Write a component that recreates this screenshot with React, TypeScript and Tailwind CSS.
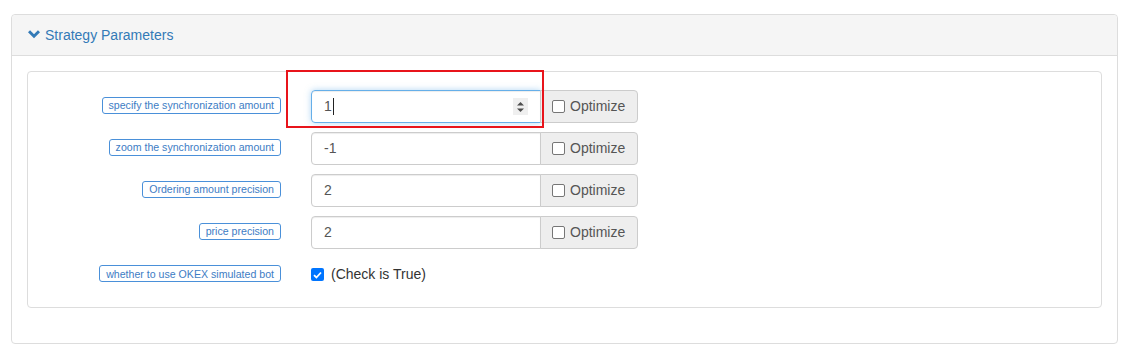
import React from "react";

type Param = {
  label: string;
  value: string;
  focused?: boolean;
};

const params: Param[] = [
  { label: "specify the synchronization amount", value: "1", focused: true },
  { label: "zoom the synchronization amount", value: "-1" },
  { label: "Ordering amount precision", value: "2" },
  { label: "price precision", value: "2" },
];

export default function App() {
  return (
    <div className="w-[1133px] h-[356px] bg-white pt-[14px] pl-[11px] font-['Liberation_Sans',Arial,sans-serif] text-[14px] text-[#333]">
      <div className="w-[1107px] h-[330px] border border-[#ddd] rounded-[4px] flex flex-col">
        <header className="h-[41px] bg-[#f5f5f5] border-b border-[#ddd] rounded-t-[4px] flex items-center pl-[16px] gap-[5px] text-[#337ab7]">
          <svg width="12" height="10" viewBox="0 0 12 10" className="mt-[-2px]">
            <path d="M1 2.2 L6 7.2 L11 2.2" fill="none" stroke="#337ab7" strokeWidth="3" />
          </svg>
          <span>Strategy Parameters</span>
        </header>

        <div className="px-[15px] pt-[15px]">
          <div className="h-[237px] border border-[#ddd] rounded-[4px] pt-[18px] flex flex-col gap-[9px]">
            {params.map((p) => (
              <ParamRow key={p.label} {...p} />
            ))}
            <div className="h-[33px] flex items-center">
              <div className="w-[253px] flex justify-end pb-[2px]">
                <Tag text="whether to use OKEX simulated bot" />
              </div>
              <div className="ml-[30px] flex items-center gap-[7px]">
                <span className="w-[13px] h-[13px] rounded-[2px] bg-[#0075ff] flex items-center justify-center">
                  <svg width="9" height="8" viewBox="0 0 9 8">
                    <path d="M1 4.2 L3.4 6.5 L8 1.5" fill="none" stroke="white" strokeWidth="1.8" />
                  </svg>
                </span>
                <span>(Check is True)</span>
              </div>
            </div>
          </div>
        </div>
      </div>
    </div>
  );
}

function Tag({ text }: { text: string }) {
  return (
    <span className="inline-block leading-[14px] text-[10.6px] px-[6px] py-[0.5px] border border-[#4a90d9] rounded-[3px] text-[#3d7cc4] whitespace-nowrap">
      {text}
    </span>
  );
}

function ParamRow({ label, value, focused }: Param) {
  return (
    <div className="h-[33px] flex items-center">
      <div className="w-[253px] flex justify-end pb-[3px]">
        <Tag text={label} />
      </div>
      <div className="relative ml-[30px] flex h-[33px]">
        <div
          className={`w-[230px] h-full rounded-l-[4px] border pl-[12px] pr-[12px] flex items-center justify-between text-[#555] ${
            focused
              ? "border-[#66afe9] shadow-[inset_0_1px_1px_rgba(0,0,0,0.075),0_0_6px_rgba(102,175,233,0.5)]"
              : "border-[#ccc] shadow-[inset_0_1px_1px_rgba(0,0,0,0.075)]"
          }`}
        >
          <span className="flex items-center">
            {value}
            {focused && <span className="w-px h-[17px] bg-[#222] ml-[1px]" />}
          </span>
          {focused && (
            <span className="w-[15px] h-[17px] bg-[#efefef] flex items-center justify-center">
              <svg width="9" height="12" viewBox="0 0 9 12">
                <path d="M4.5 1 L8 4.6 H1 Z" fill="#4d4d4d" />
                <path d="M4.5 11 L8 7.4 H1 Z" fill="#4d4d4d" />
              </svg>
            </span>
          )}
        </div>
        <label className="w-[98px] h-full ml-[-1px] border border-[#ccc] rounded-r-[4px] bg-[#eee] flex items-center pl-[11px] gap-[5px] text-[#555]">
          <span className="w-[13px] h-[13px] rounded-[2px] border border-[#767676] bg-white" />
          <span>Optimize</span>
        </label>
        {focused && (
          <div className="absolute left-[-25px] top-[-20px] w-[258px] h-[58px] border-2 border-[#e8141b] pointer-events-none" />
        )}
      </div>
    </div>
  );
}
